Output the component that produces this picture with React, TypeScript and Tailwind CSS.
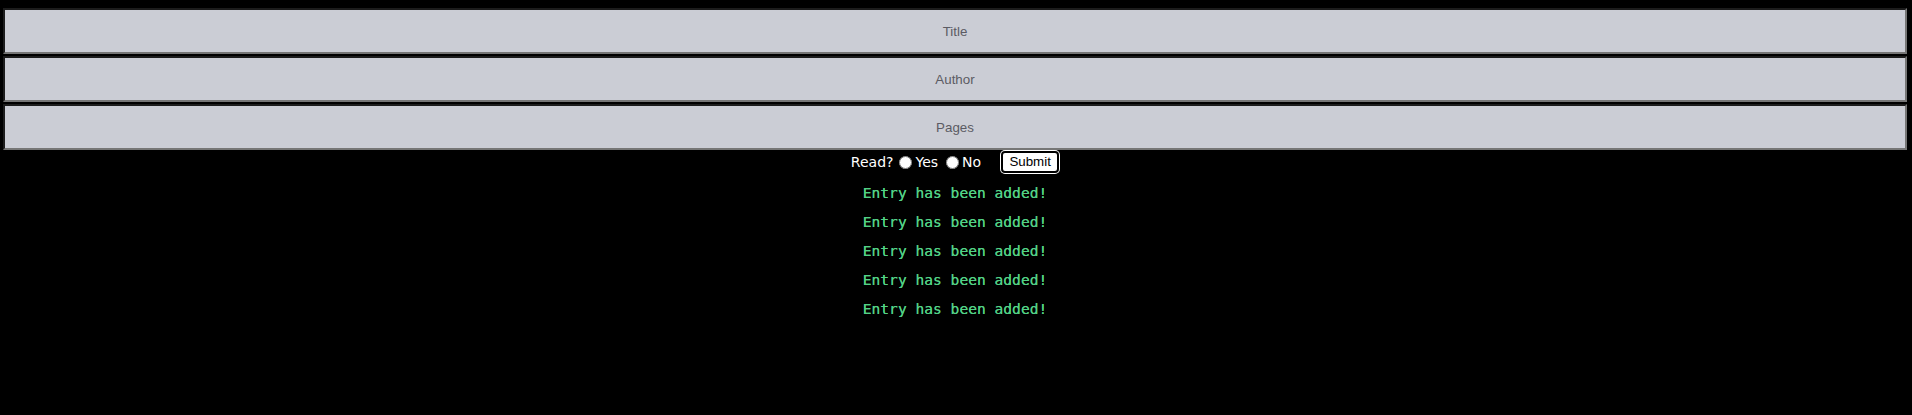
import { useState } from 'react'

const fields = ['Title', 'Author', 'Pages']

const entries = Array.from({ length: 5 }, () => 'Entry has been added!')

export default function App() {
	const [read, setRead] = useState<string | null>(null)

	return (
		<div className="min-h-[415px] w-full bg-black pt-[8px] font-['Liberation_Sans',Arial,sans-serif]">
			{/* form inputs */}
			<div className="flex flex-col gap-[2px] pl-[3px]">
				{fields.map(f => (
					<input
						key={f}
						type="text"
						placeholder={f}
						className="block h-[46px] w-[1904px] border-2 border-t-[#1c1c1c] border-l-[#1c1c1c] border-r-[#767676] border-b-[#767676] bg-[#cbcdd5] text-center text-[13.33px] text-[#333] outline-none placeholder:text-[#5b5b63]"
					/>
				))}
			</div>

			<div className="flex h-[25px] items-center justify-center pb-[1px] pr-[2px]">
				<span className="font-['DejaVu_Sans',sans-serif] text-[14px] text-white">Read?</span>
				<input
					type="radio"
					name="read"
					checked={read === 'yes'}
					onChange={() => setRead('yes')}
					className="ml-[6px] mr-[3px] h-[13px] w-[13px]"
				/>
				<span className="font-['DejaVu_Sans',sans-serif] text-[14px] text-white">Yes</span>
				<input
					type="radio"
					name="read"
					checked={read === 'no'}
					onChange={() => setRead('no')}
					className="ml-[8px] mr-[3px] h-[13px] w-[13px]"
				/>
				<span className="font-['DejaVu_Sans',sans-serif] text-[14px] text-white">No</span>
				<button className="ml-[20px] h-[22px] w-[58px] rounded-[4px] border-2 border-black bg-white text-[13.33px] leading-none text-black ring-1 ring-white">
					Submit
				</button>
			</div>

			<div className="flex flex-col items-center pt-[3px] pr-[2px]">
				{entries.map((e, i) => (
					<div
						key={i}
						className="flex h-[29px] items-center font-['DejaVu_Sans_Mono',monospace] text-[14.6px] text-[#52d285] [text-shadow:0_0_0.4px_#52d285]"
					>
						{e}
					</div>
				))}
			</div>
		</div>
	)
}
